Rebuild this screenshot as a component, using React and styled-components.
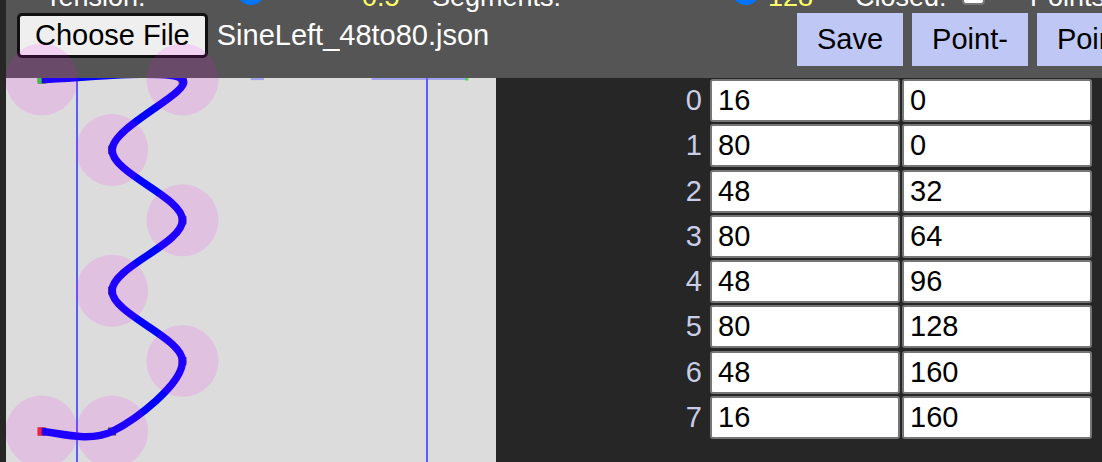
import React from 'react';
import styled, { createGlobalStyle } from 'styled-components';

const GlobalStyle = createGlobalStyle`
  html, body { margin: 0; padding: 0; background: #262626; overflow: hidden; }
  body { font-family: "Liberation Sans", Arial, sans-serif; }
`;

const Page = styled.div`
  width: 1102px;
  height: 462px;
  overflow: hidden;
  padding-left: 6px;
  box-sizing: border-box;
  background: #262626;
  display: flex;
  flex-direction: column;
`;

const Header = styled.header`
  height: 78px;
  flex-shrink: 0;
  background: #555555;
  overflow: hidden;
  display: flex;
  flex-direction: column;
`;

const ControlRow = styled.div`
  display: flex;
  align-items: flex-start;
  height: 32px;
  margin-top: -19px;
  padding-left: 39px;
  flex-shrink: 0;
  white-space: nowrap;
`;

const Cell = styled.div`
  width: ${(p) => p.$w}px;
  flex-shrink: 0;
  padding-left: ${(p) => p.$pl || 0}px;
  box-sizing: border-box;
  font-size: 27px;
  line-height: 32px;
  color: ${(p) => (p.$value ? '#ffff66' : '#ffffff')};
`;

const Slider = styled.div`
  position: relative;
  width: 182px;
  height: 28px;
  margin-top: -4px;
  flex-shrink: 0;
`;

const Track = styled.div`
  position: absolute;
  left: 0;
  right: 0;
  top: 11px;
  height: 6px;
  border-radius: 3px;
  background: #0075ff;
`;

const Thumb = styled.div`
  position: absolute;
  top: 0;
  width: 28px;
  height: 28px;
  border-radius: 50%;
  background: #0075ff;
`;

const CheckBox = styled.div`
  width: 23px;
  height: 23px;
  margin-top: 1px;
  box-sizing: border-box;
  border: 2px solid #767676;
  border-radius: 4px;
  background: #ffffff;
  flex-shrink: 0;
`;

const FileRow = styled.div`
  display: flex;
  align-items: flex-start;
  padding-left: 11px;
  flex-shrink: 0;
  white-space: nowrap;
`;

const FileGroup = styled.div`
  width: 780px;
  flex-shrink: 0;
  display: flex;
  align-items: center;
  gap: 9px;
  height: 45px;
`;

const FileButton = styled.button`
  height: 45px;
  padding: 0 15px;
  font-family: "Liberation Sans", Arial, sans-serif;
  font-size: 29px;
  background: #efefef;
  color: #000;
  border: 3px solid #111111;
  border-radius: 5px;
`;

const FileName = styled.span`
  color: #ffffff;
  font-size: 29px;
`;

const ActionButton = styled.button`
  height: 53px;
  padding: 0 20px;
  margin-right: 9px;
  flex-shrink: 0;
  font-family: "Liberation Sans", Arial, sans-serif;
  font-size: 29px;
  background: #bfc8f5;
  color: #000;
  border: none;
`;

const Main = styled.main`
  flex: 1;
  display: flex;
  min-height: 0;
`;

const Canvas = styled.div`
  width: 490px;
  flex-shrink: 0;
  background: #dcdcdc;
  position: relative;
`;

const Drawing = styled.svg`
  display: block;
  overflow: visible;
`;

const Panel = styled.section`
  flex: 1;
  padding: 1px 10px 0 0;
  box-sizing: border-box;
`;

const PointGrid = styled.div`
  display: grid;
  grid-template-columns: 1fr 190px 190px;
  column-gap: 2px;
  row-gap: 2.3px;
`;

const IndexCell = styled.div`
  text-align: right;
  padding-right: 6px;
  color: #c9cde6;
  font-size: 29px;
  line-height: 43px;
`;

const CoordInput = styled.input`
  height: 43px;
  width: 100%;
  box-sizing: border-box;
  border: 2px solid #767676;
  border-radius: 3px;
  padding: 0 6px;
  font-family: "Liberation Sans", Arial, sans-serif;
  font-size: 29px;
  color: #000;
  background: #fff;
  outline: none;
`;

const points = [
  [16, 0], [80, 0], [48, 32], [80, 64], [48, 96], [80, 128], [48, 160], [16, 160],
];

const S = 2.2;
const OX = 0.5;
const OY = 1.5;
const tx = (x) => OX + x * S;
const ty = (y) => OY + y * S;

function splinePath(pts) {
  const n = pts.length;
  let d = `M${tx(pts[0][0])},${ty(pts[0][1])}`;
  for (let i = 0; i < n - 1; i++) {
    const p0 = pts[Math.max(i - 1, 0)];
    const p1 = pts[i];
    const p2 = pts[i + 1];
    const p3 = pts[Math.min(i + 2, n - 1)];
    const c1 = [p1[0] + (p2[0] - p0[0]) / 6, p1[1] + (p2[1] - p0[1]) / 6];
    const c2 = [p2[0] - (p3[0] - p1[0]) / 6, p2[1] - (p3[1] - p1[1]) / 6];
    d += ` C${tx(c1[0])},${ty(c1[1])} ${tx(c2[0])},${ty(c2[1])} ${tx(p2[0])},${ty(p2[1])}`;
  }
  return d;
}

function RangeControl({ value }) {
  return (
    <Slider>
      <Track />
      <Thumb style={{ left: `${value * (182 - 28)}px` }} />
    </Slider>
  );
}

export default function App() {
  const W = 490;
  const H = 384;
  return (
    <Page>
      <GlobalStyle />
      <Header>
        <ControlRow>
          <Cell $w={115}>Tension:</Cell>
          <RangeControl value={0.5} />
          <Cell $w={90} $pl={20} $value>0.5</Cell>
          <Cell $w={146}>Segments:</Cell>
          <RangeControl value={1} />
          <Cell $w={95} $pl={8} $value>128</Cell>
          <Cell $w={107}>Closed:</Cell>
          <CheckBox />
          <Cell $w={200} $pl={45}>Points:</Cell>
        </ControlRow>
        <FileRow>
          <FileGroup>
            <FileButton>Choose File</FileButton>
            <FileName>SineLeft_48to80.json</FileName>
          </FileGroup>
          <ActionButton>Save</ActionButton>
          <ActionButton>Point-</ActionButton>
          <ActionButton>Point+</ActionButton>
        </FileRow>
      </Header>
      <Main>
        <Canvas>
          <Drawing width={W} height={H} viewBox={`0 0 ${W} ${H}`}>
            <defs>
              <clipPath id="area">
                <rect x="0" y="0" width={W} height={H} />
              </clipPath>
            </defs>
            <g clipPath="url(#area)">
              <line x1="71" y1="0" x2="71" y2={H} stroke="#5a5aff" strokeWidth="2" />
              <line x1="421" y1="0" x2="421" y2={H} stroke="#5a5aff" strokeWidth="2" />
              <line x1={tx(111)} y1={ty(-0.4)} x2={tx(117)} y2={ty(-0.4)} stroke="#6a6aff" strokeOpacity="0.5" strokeWidth="3" />
              <line x1={tx(166)} y1={ty(-0.4)} x2={tx(209)} y2={ty(-0.4)} stroke="#6a6aff" strokeOpacity="0.5" strokeWidth="3" />
              <rect x={tx(209) - 1} y={ty(0) - 2} width="3" height="3" fill="#44dd44" />
              {points.map(([x, y], i) => (
                <rect key={i} x={tx(x) - 4} y={ty(y) - 4} width="8" height="8" fill="#3a3a3a" />
              ))}
              <rect x={tx(16) - 4} y={ty(0) - 4} width="8" height="8" fill="#22dd22" />
              <rect x={tx(16) - 4} y={ty(160) - 4} width="8" height="8" fill="#ff2222" />
              <path d={splinePath(points)} fill="none" stroke="#0000ff" strokeWidth="7.5" strokeLinejoin="round" />
            </g>
            {points.map(([x, y], i) => (
              <circle key={i} cx={tx(x)} cy={ty(y)} r="36" fill="rgba(255,0,255,0.12)" />
            ))}
          </Drawing>
        </Canvas>
        <Panel>
          <PointGrid>
            {points.map(([x, y], i) => (
              <React.Fragment key={i}>
                <IndexCell>{i}</IndexCell>
                <CoordInput defaultValue={x} />
                <CoordInput defaultValue={y} />
              </React.Fragment>
            ))}
          </PointGrid>
        </Panel>
      </Main>
    </Page>
  );
}
